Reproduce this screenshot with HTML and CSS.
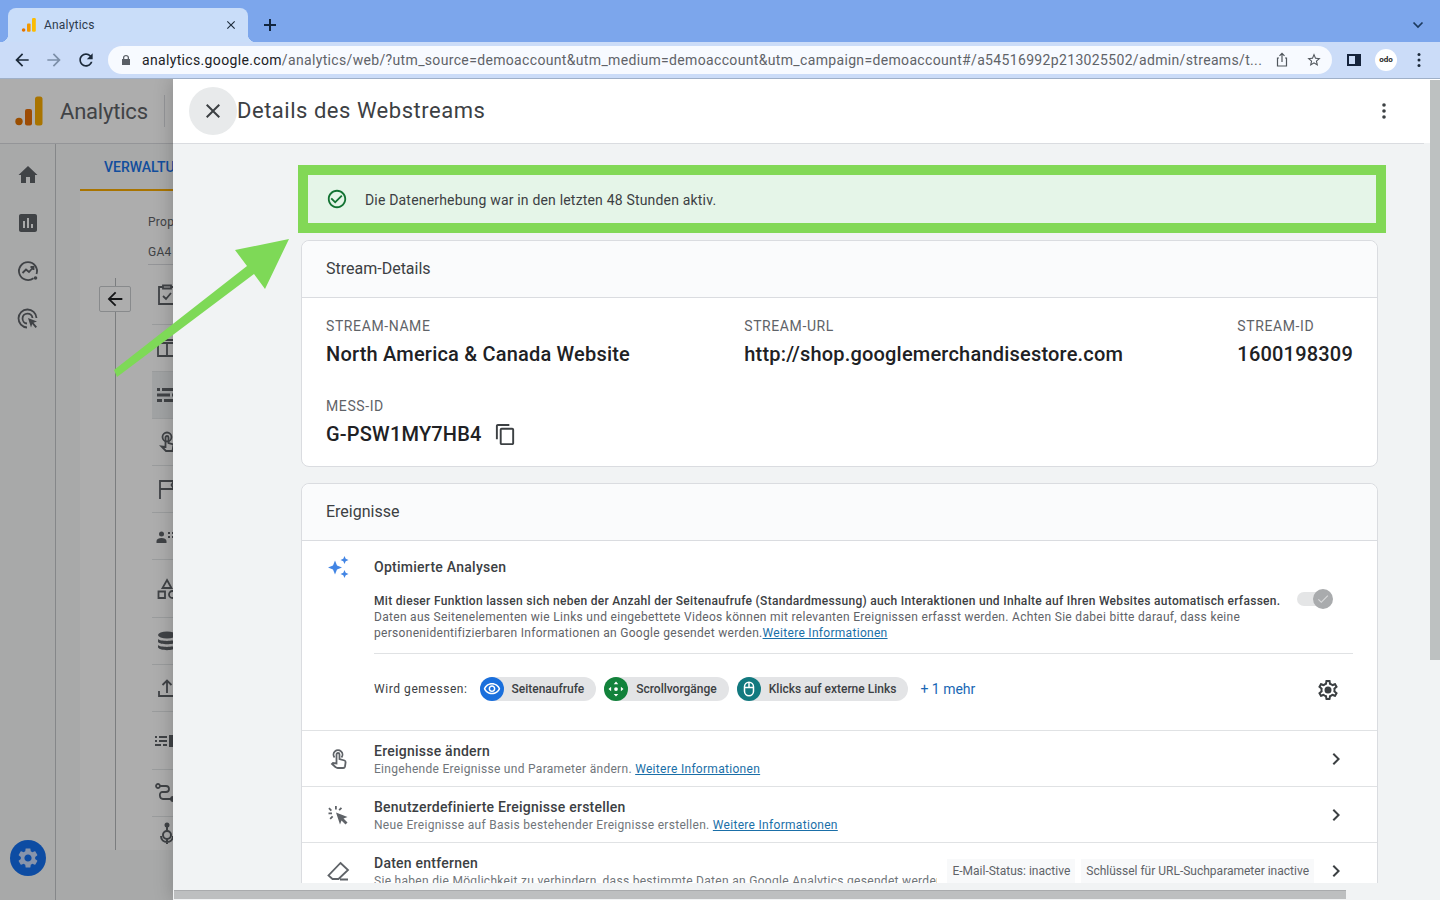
FILE: index.html
```html
<!DOCTYPE html>
<html lang="de">
<head>
    <meta charset="UTF-8">
    <title>Analytics</title>
    <link rel="stylesheet" href="styles.css">
</head>
<body>
    <div class="tabstrip">
        <div class="tab">
            <svg class="favicon" viewBox="0 0 16 16"><circle cx="2.6" cy="13" r="1.8" fill="#e37400"/><rect x="6" y="6.5" width="3.6" height="8.3" rx="1" fill="#f29900"/><rect x="11" y="1" width="3.8" height="13.8" rx="1.2" fill="#fbbc04"/></svg>
            <span class="tab-title">Analytics</span>
            <svg class="tab-close" viewBox="0 0 24 24"><path d="M19 6.41L17.59 5 12 10.59 6.41 5 5 6.41 10.59 12 5 17.59 6.41 19 12 13.41 17.59 19 19 17.59 13.41 12z"/></svg>
        </div>
        <svg class="new-tab" viewBox="0 0 14 14"><path d="M6 1h2v5h5v2H8v5H6V8H1V6h5z"/></svg>
        <svg class="tab-list" viewBox="0 0 12 12"><path d="M1.5 3.5L6 8l4.5-4.5" fill="none" stroke="#1c3a5e" stroke-width="1.7"/></svg>
    </div>

    <div class="toolbar">
        <svg class="nav-icon" viewBox="0 0 24 24"><path d="M20 11H7.83l5.59-5.59L12 4l-8 8 8 8 1.41-1.41L7.83 13H20v-2z"/></svg>
        <svg class="nav-icon muted" viewBox="0 0 24 24"><path d="M12 4l-1.41 1.41L16.17 11H4v2h12.17l-5.58 5.59L12 20l8-8z"/></svg>
        <svg class="nav-icon" viewBox="0 0 24 24"><path d="M17.65 6.35C16.2 4.9 14.21 4 12 4c-4.42 0-7.99 3.58-7.99 8s3.57 8 7.99 8c3.73 0 6.84-2.55 7.73-6h-2.08c-.82 2.33-3.04 4-5.65 4-3.31 0-6-2.69-6-6s2.69-6 6-6c1.66 0 3.14.69 4.22 1.78L13 11h7V4l-2.35 2.35z"/></svg>
        <div class="urlbar">
            <svg class="lock" viewBox="0 0 12 12"><path d="M3 5V3.6C3 1.9 4.3 1 6 1s3 .9 3 2.6V5h1v6H2V5zm1.3 0h3.4V3.6C7.7 2.6 7 2.2 6 2.2s-1.7.4-1.7 1.4z"/></svg>
            <span class="url"><b>analytics.google.com</b>/analytics/web/?utm_source=demoaccount&amp;utm_medium=demoaccount&amp;utm_campaign=demoaccount#/a54516992p213025502/admin/streams/t...</span>
            <svg class="url-action share" viewBox="0 0 16 16"><path d="M5 6H3.5v8h9V6H11M8 10V1.500M5.500 3.800L8 1.300l2.500 2.500" fill="none" stroke="#50565c" stroke-width="1.2"/></svg>
            <svg class="url-action" viewBox="0 0 24 24"><path d="M22 9.24l-7.19-.62L12 2 9.19 8.63 2 9.24l5.46 4.73L5.82 21 12 17.27 18.18 21l-1.630-7.03L22 9.24zM12 15.4l-3.76 2.27 1-4.28-3.32-2.88 4.38-.38L12 6.100l1.710 4.040 4.380.38-3.320 2.880 1 4.280L12 15.4z"/></svg>
        </div>
        <div class="side-panel"></div>
        <div class="avatar">odo</div>
        <svg class="chrome-menu" viewBox="0 0 4 16"><circle cx="2" cy="2.500" r="1.500"/><circle cx="2" cy="8" r="1.500"/><circle cx="2" cy="13.500" r="1.500"/></svg>
    </div>

    <div class="viewport">
        <div class="app">
            <header class="app-header">
                <svg class="logo" viewBox="0 0 28 30"><circle cx="4" cy="25.500" r="3.700" fill="#e37400"/><rect x="10" y="13" width="7" height="16.500" rx="2" fill="#e8710a"/><rect x="20" y="0.500" width="7.500" height="29" rx="2.500" fill="#f9ab00"/></svg>
                <span class="product">Analytics</span>
                <span class="header-divider"></span>
            </header>
            <div class="app-body">
                <nav class="rail">
                    <svg class="rail-icon" viewBox="0 0 24 24" fill="#5f6368"><path d="M10 20v-6h4v6h5v-8h2.500L12 3 2.500 12H5v8z"/></svg>
                    <svg class="rail-icon" viewBox="0 0 24 24" fill="#5f6368"><path d="M19 3H5c-1.100 0-2 .9-2 2v14c0 1.100.9 2 2 2h14c1.100 0 2-.9 2-2V5c0-1.100-.9-2-2-2zM9 17H7v-7h2v7zm4 0h-2V7h2v10zm4 0h-2v-4h2v4z"/></svg>
                    <svg class="rail-icon" viewBox="0 0 24 24" fill="none" stroke="#5f6368" stroke-width="1.800"><path d="M17.500 19.200A9 9 0 1 1 20.500 15"/><path d="M6.500 14l3.500-3.500 3 2.500 4.500-5M14.500 8h3v3"/><circle cx="19.500" cy="19" r="1.800" fill="#5f6368" stroke="none"/></svg>
                    <svg class="rail-icon" viewBox="0 0 24 24" fill="none" stroke="#5f6368" stroke-width="1.800"><path d="M11 20.500a9 9 0 1 1 9.500-9.500M11 16.500a5 5 0 1 1 5.500-5.500"/><path d="M12 11l9 3.500-3.500 1.200 3.500 4-1.500 1.300-3.300-4-1.200 3.500z" fill="#5f6368" stroke="none"/></svg>
                    <div class="fab">
                        <svg viewBox="0 0 24 24"><path d="M19.140 12.940c.04-.3.06-.61.06-.94 0-.32-.02-.64-.07-.94l2.030-1.580c.18-.14.23-.41.12-.61l-1.920-3.320c-.12-.22-.37-.29-.59-.22l-2.390.96c-.5-.38-1.030-.7-1.620-.94l-.36-2.540c-.04-.24-.24-.41-.48-.41h-3.840c-.24 0-.43.17-.47.41l-.36 2.540c-.59.24-1.130.57-1.620.94l-2.390-.96c-.22-.08-.47 0-.59.22L2.740 8.870c-.12.21-.08.47.12.61l2.030 1.580c-.05.3-.09.63-.09.94s.02.64.07.94l-2.030 1.580c-.18.14-.23.41-.12.61l1.920 3.320c.12.22.37.29.59.22l2.390-.96c.5.38 1.030.7 1.620.94l.36 2.540c.05.24.24.41.48.41h3.840c.24 0 .44-.17.47-.41l.36-2.540c.59-.24 1.130-.56 1.620-.94l2.390.96c.22.08.47 0 .59-.22l1.920-3.320c.12-.22.07-.47-.12-.61l-2.010-1.580zM12 15.600c-1.980 0-3.600-1.620-3.600-3.600s1.620-3.600 3.600-3.600 3.600 1.620 3.600 3.600-1.620 3.600-3.600 3.600z"/></svg>
                    </div>
                </nav>
                <main class="admin-main">
                    <div class="admin-tabs"><span class="admin-tab">VERWALTUNG</span></div>
                    <div class="admin-panel">
                        <div class="back-col">
                            <div class="back-line">
                                <div class="back-btn"><svg viewBox="0 0 24 24"><path d="M20 11H7.830l5.590-5.590L12 4l-8 8 8 8 1.410-1.410L7.830 13H20v-2z"/></svg></div>
                            </div>
                        </div>
                        <div class="prop-col">
                            <div class="prop-label">Property</div>
                            <div class="prop-name">GA4 - Google Merch Shop</div>
                            <div class="nav-row first"><svg viewBox="0 0 24 24" fill="none" stroke="#5f6368" stroke-width="1.800"><path d="M8 4H4v17h16V4h-4M8 2.500h8v3H8zM8 13l3 3 5-6"/></svg></div>
                            <div class="nav-row"><svg viewBox="0 0 24 24" fill="none" stroke="#5f6368" stroke-width="1.800"><path d="M3 7h18v13H3zM3 7l2-3h14l2 3M12 7v13"/></svg></div>
                            <div class="nav-row active"><svg viewBox="0 0 24 24" fill="#5f6368"><path d="M2 5h3v3H2zM7 5h15v3H7zM2 10.500h13v3H2zM17 10.500h5v3h-5zM2 16h5v3H2zM9 16h13v3H9z"/></svg></div>
                            <div class="nav-row"><svg viewBox="0 0 24 24" fill="none" stroke="#5f6368" stroke-width="1.800"><circle cx="12" cy="7" r="4.500"/><path d="M10.500 17V7.500a1.500 1.500 0 0 1 3 0V13l5 1.500-1 6.500H11l-4.500-4.500z"/></svg></div>
                            <div class="nav-row"><svg viewBox="0 0 24 24" fill="none" stroke="#5f6368" stroke-width="1.800"><path d="M5 22V4h14l-2.500 4 2.500 4H5"/></svg></div>
                            <div class="nav-row"><svg viewBox="0 0 24 24" fill="#5f6368"><circle cx="6.500" cy="10" r="2.500"/><path d="M1.500 19v-2c0-2 2.500-3 5-3s5 1 5 3v2zM13 8h2v2h-2zM17 8h5v2h-5zM13 12h2v2h-2zM17 12h5v2h-5z"/></svg></div>
                            <div class="nav-row tall"><svg viewBox="0 0 24 24" fill="none" stroke="#5f6368" stroke-width="1.800"><path d="M12 3l4.500 8h-9zM3.500 14.500h6.500v6.500H3.500z"/><circle cx="17.500" cy="17.500" r="3.500"/></svg></div>
                            <div class="nav-row"><svg viewBox="0 0 24 24" fill="#5f6368"><ellipse cx="12" cy="6" rx="9" ry="3.500"/><path d="M3 10c2 2.500 16 2.500 18 0v3c-2 3-16 3-18 0zM3 16c2 2.500 16 2.500 18 0v2.500c-2 3.500-16 3.500-18 0z"/></svg></div>
                            <div class="nav-row"><svg viewBox="0 0 24 24" fill="none" stroke="#5f6368" stroke-width="1.800"><path d="M4 15v5h16v-5M12 17V5M7.500 9L12 4.500 16.500 9"/></svg></div>
                            <div class="nav-row tall"><svg viewBox="0 0 24 24" fill="#5f6368"><path d="M0 7h2v2H0zM4 7h8v2H4zM0 11h2v2H0zM4 11h8v2H4zM0 15h6v2H0zM8 15h4v2H8zM14 6h10v12H14z"/></svg></div>
                            <div class="nav-row"><svg viewBox="0 0 24 24" fill="none" stroke="#5f6368" stroke-width="1.800"><circle cx="3" cy="5" r="2"/><path d="M5 5h6c4 0 4 6 0 6H7c-3 0-3 7 1 7h8"/><circle cx="18" cy="18" r="2" fill="#5f6368"/></svg></div>
                            <div class="nav-row last"><svg viewBox="0 0 24 24" fill="none" stroke="#5f6368" stroke-width="2"><circle cx="12" cy="3" r="2.500" fill="#5f6368" stroke="none"/><circle cx="12" cy="13" r="4"/><path d="M12 5v4M6 14c0 8 12 8 12 0M12 17v5"/></svg></div>
                        </div>
                    </div>
                </main>
            </div>
        </div>

        <div class="scrim"></div>

        <section class="drawer">
            <div class="drawer-main">
                <div class="drawer-header">
                    <div class="close-btn"><svg viewBox="0 0 24 24"><path d="M19 6.410L17.590 5 12 10.590 6.410 5 5 6.410 10.590 12 5 17.590 6.410 19 12 13.410 17.590 19 19 17.590 13.410 12z"/></svg></div>
                    <h1>Details des Webstreams</h1>
                    <svg class="drawer-more" viewBox="0 0 4 16"><circle cx="2" cy="2" r="1.800"/><circle cx="2" cy="8" r="1.800"/><circle cx="2" cy="14" r="1.800"/></svg>
                </div>
                <div class="drawer-body">
                    <div class="status-banner">
                        <svg viewBox="0 0 24 24"><path d="M16.590 7.580L10 14.170l-3.590-3.580L5 12l5 5 8-8zM12 2C6.480 2 2 6.480 2 12s4.480 10 10 10 10-4.480 10-10S17.520 2 12 2zm0 18c-4.420 0-8-3.580-8-8s3.580-8 8-8 8 3.580 8 8-3.580 8-8 8z"/></svg>
                        <span>Die Datenerhebung war in den letzten 48 Stunden aktiv.</span>
                    </div>

                    <div class="card details-card">
                        <div class="card-header">Stream-Details</div>
                        <div class="details-content">
                            <div class="details-row">
                                <div><div class="field-label">STREAM-NAME</div><div class="field-value">North America &amp; Canada Website</div></div>
                                <div><div class="field-label">STREAM-URL</div><div class="field-value">http://shop.googlemerchandisestore.com</div></div>
                                <div><div class="field-label">STREAM-ID</div><div class="field-value">1600198309</div></div>
                            </div>
                            <div class="field-label">MESS-ID</div>
                            <div class="field-value copy-value">G-PSW1MY7HB4
                                <svg viewBox="0 0 24 24"><path d="M16 1H4c-1.100 0-2 .9-2 2v14h2V3h12V1zm3 4H8c-1.100 0-2 .9-2 2v14c0 1.100.9 2 2 2h11c1.100 0 2-.9 2-2V7c0-1.100-.9-2-2-2zm0 16H8V7h11v14z"/></svg>
                            </div>
                        </div>
                    </div>

                    <div class="card events-card">
                        <div class="card-header">Ereignisse</div>
                        <div class="enhanced">
                            <svg class="sparkle" viewBox="0 0 24 24"><path d="M9 5.500l2 5 5 2-5 2-2 5-2-5-5-2 5-2zM18.500 1l1.200 2.800 2.800 1.200-2.800 1.200-1.200 2.800-1.200-2.800L14.500 5l2.800-1.200zM18.500 15l1.200 2.800 2.800 1.200-2.800 1.200-1.200 2.800-1.200-2.800-2.800-1.200 2.800-1.200z"/></svg>
                            <div class="enhanced-main">
                                <div class="enhanced-title">Optimierte Analysen</div>
                                <div class="enhanced-top">
                                    <p class="enhanced-desc"><strong>Mit dieser Funktion lassen sich neben der Anzahl der Seitenaufrufe (Standardmessung) auch Interaktionen und Inhalte auf Ihren Websites automatisch erfassen.</strong><br>Daten aus Seitenelementen wie Links und eingebettete Videos können mit relevanten Ereignissen erfasst werden. Achten Sie dabei bitte darauf, dass keine<br>personenidentifizierbaren Informationen an Google gesendet werden.<a href="#">Weitere Informationen</a></p>
                                    <div class="toggle"><span class="toggle-knob"><svg viewBox="0 0 24 24"><path d="M9 16.200L4.800 12l-1.400 1.400L9 19 21 7l-1.400-1.400z"/></svg></span></div>
                                </div>
                                <div class="measured">
                                    <span class="measured-label">Wird gemessen:</span>
                                    <span class="chip"><span class="chip-icon blue"><svg viewBox="0 0 24 24"><path d="M12 6c3.790 0 7.170 2.130 8.820 5.500C19.170 14.870 15.790 17 12 17s-7.170-2.130-8.820-5.500C4.830 8.130 8.210 6 12 6m0-2C7 4 2.730 7.110 1 11.500 2.730 15.890 7 19 12 19s9.270-3.110 11-7.500C21.270 7.110 17 4 12 4zm0 5c1.380 0 2.500 1.120 2.500 2.500S13.380 14 12 14s-2.500-1.120-2.500-2.500S10.620 9 12 9m0-2c-2.480 0-4.500 2.020-4.500 4.500S9.520 16 12 16s4.500-2.020 4.500-4.500S14.480 7 12 7z"/></svg></span>Seitenaufrufe</span>
                                    <span class="chip"><span class="chip-icon green"><svg viewBox="0 0 24 24"><circle cx="12" cy="12" r="2.500"/><path d="M12 2l3 3.500H9zM12 22l-3-3.500h6zM2 12l3.500-3v6zM22 12l-3.500 3V9z"/></svg></span>Scrollvorgänge</span>
                                    <span class="chip"><span class="chip-icon teal"><svg viewBox="0 0 24 24" stroke="#fff" stroke-width="2"><rect x="6" y="3" width="12" height="18" rx="6"/><path d="M12 3v7M6 10h12"/></svg></span>Klicks auf externe Links</span>
                                    <span class="more-link">+ 1 mehr</span>
                                    <svg class="settings" viewBox="0 0 24 24"><path d="M19.430 12.980c.04-.32.07-.64.07-.98 0-.34-.03-.66-.07-.98l2.110-1.650c.19-.15.24-.42.12-.64l-2-3.460c-.09-.16-.26-.25-.44-.25-.06 0-.12.01-.17.03l-2.490 1c-.52-.4-1.080-.73-1.690-.98l-.38-2.650C14.460 2.180 14.250 2 14 2h-4c-.25 0-.46.18-.49.42l-.38 2.650c-.61.25-1.170.59-1.690.98l-2.490-1c-.06-.02-.12-.03-.18-.03-.17 0-.34.09-.43.25l-2 3.460c-.13.22-.07.49.12.64l2.110 1.650c-.04.32-.07.65-.07.98 0 .33.03.66.07.98l-2.110 1.650c-.19.15-.24.42-.12.64l2 3.460c.09.16.26.25.44.25.06 0 .12-.01.17-.03l2.490-1c.52.4 1.080.73 1.690.98l.38 2.650c.03.24.24.42.49.42h4c.25 0 .46-.18.49-.42l.38-2.650c.61-.25 1.170-.59 1.690-.98l2.490 1c.06.02.12.03.18.03.17 0 .34-.09.43-.25l2-3.460c.12-.22.07-.49-.12-.64l-2.110-1.650zm-1.980-1.710c.04.31.05.52.05.73 0 .21-.02.43-.05.73l-.14 1.130.89.7 1.080.84-.7 1.210-1.270-.51-1.040-.42-.9.68c-.43.32-.84.56-1.250.73l-1.060.43-.16 1.130-.2 1.350h-1.400l-.19-1.350-.16-1.130-1.060-.43c-.43-.18-.83-.41-1.230-.71l-.91-.7-1.060.43-1.270.51-.7-1.210 1.080-.84.89-.7-.14-1.130c-.03-.31-.05-.54-.05-.74s.02-.43.05-.73l.14-1.130-.89-.7-1.080-.84.7-1.210 1.270.51 1.040.42.9-.68c.43-.32.84-.56 1.250-.73l1.060-.43.16-1.130.2-1.350h1.390l.19 1.350.16 1.130 1.060.43c.43.18.83.41 1.230.71l.91.7 1.060-.43 1.270-.51.7 1.210-1.070.85-.89.7.14 1.130zM12 8.500a3.500 3.500 0 1 0 0 7 3.500 3.500 0 0 0 0-7z"/></svg>
                                </div>
                            </div>
                        </div>

                        <div class="event-row">
                            <svg class="row-icon" viewBox="0 0 24 24" fill="none" stroke="#5f6368" stroke-width="1.800"><path d="M8.500 10.500a4.500 4.500 0 1 1 7 0"/><path d="M10.500 16.500V7.500a1.500 1.500 0 0 1 3 0V12l5 1.500c1 .4 1.200 1 1.100 2l-.6 4c-.2 1-.8 1.500-1.800 1.500h-5.500c-1 0-1.500-.3-2-.8l-3.700-3.200 1-1z"/></svg>
                            <div class="row-text"><div class="row-title">Ereignisse ändern</div><div class="row-sub">Eingehende Ereignisse und Parameter ändern. <a href="#">Weitere Informationen</a></div></div>
                            <svg class="chevron" viewBox="0 0 24 24"><path d="M10 6L8.590 7.410 13.170 12l-4.580 4.590L10 18l6-6z"/></svg>
                        </div>
                        <div class="event-row">
                            <svg class="row-icon" viewBox="0 0 24 24" fill="#5f6368"><path d="M10 9.500l11.500 4.500-4 1.500 4 4-2 2-4-4-1.500 4zM9 3h1.800v3.500H9zM2.500 9.500H6v1.800H2.500zM14.800 4.200l1.300 1.300-2.300 2.300-1.300-1.300zM3.600 4.500L6 6.900 4.700 8.200 2.300 5.800zM6 12.800l1.300 1.300-2.500 2.400-1.300-1.300z"/></svg>
                            <div class="row-text"><div class="row-title">Benutzerdefinierte Ereignisse erstellen</div><div class="row-sub">Neue Ereignisse auf Basis bestehender Ereignisse erstellen. <a href="#">Weitere Informationen</a></div></div>
                            <svg class="chevron" viewBox="0 0 24 24"><path d="M10 6L8.590 7.410 13.170 12l-4.580 4.590L10 18l6-6z"/></svg>
                        </div>
                        <div class="event-row">
                            <svg class="row-icon" viewBox="0 0 24 24" fill="none" stroke="#5f6368" stroke-width="1.800"><path d="M14.500 4L22 11 12.500 20H6.500L2.500 16.500zM14 20.500h8"/></svg>
                            <div class="row-text"><div class="row-title">Daten entfernen</div><div class="row-sub">Sie haben die Möglichkeit zu verhindern, dass bestimmte Daten an Google Analytics gesendet werden.</div></div>
                            <span class="row-tag">E-Mail-Status: inactive</span>
                            <span class="row-tag">Schlüssel für URL-Suchparameter inactive</span>
                            <svg class="chevron" viewBox="0 0 24 24"><path d="M10 6L8.590 7.410 13.170 12l-4.580 4.590L10 18l6-6z"/></svg>
                        </div>
                    </div>
                </div>
                <div class="hscroll"><div class="hscroll-thumb"></div></div>
            </div>
            <div class="vscroll"><div class="vscroll-thumb"></div></div>
        </section>
    </div>

    <!-- green annotation arrow drawn on top of the screenshot -->
    <svg class="annotation" viewBox="0 0 1440 900"><polygon points="114,370 247,266 235,250 289,239 265,289 254,274 117,377" fill="#7ed957"/></svg>
</body>
</html>
```

FILE: styles.css
```css
* {
    box-sizing: border-box;
    margin: 0;
    padding: 0;
}

body {
    height: 900px;
    overflow: hidden;
    font-family: Roboto, "Liberation Sans", sans-serif;
    color: #202124;
    background: #fff;
}

svg {
    display: block;
    flex: none;
}

a {
    color: #1a6fa8;
}

/* browser chrome */
.tabstrip {
    display: flex;
    align-items: flex-end;
    height: 42px;
    padding-left: 8px;
    background: #7ca6ec;
}

.tab {
    position: relative;
    display: flex;
    align-items: center;
    width: 240px;
    height: 34px;
    padding: 0 10px 0 13px;
    background: #c9ddf9;
    border-radius: 8px 8px 0 0;
}

.tab::before,
.tab::after {
    content: "";
    position: absolute;
    bottom: 0;
    width: 8px;
    height: 8px;
}

.tab::before {
    left: -8px;
    background: radial-gradient(circle at 0 0, transparent 8px, #c9ddf9 8.5px);
}

.tab::after {
    right: -8px;
    background: radial-gradient(circle at 100% 0, transparent 8px, #c9ddf9 8.5px);
}

.favicon {
    width: 16px;
    height: 16px;
}

.tab-title {
    flex: 1;
    margin-left: 7px;
    font-size: 12px;
    letter-spacing: 0.2px;
    color: #2c3a4d;
}

.tab-close {
    width: 14px;
    height: 14px;
    fill: #1f2d3d;
}

.new-tab {
    width: 14px;
    height: 14px;
    margin: 0 0 10px 15px;
    fill: #12263f;
}

.tab-list {
    width: 12px;
    height: 12px;
    margin: 0 16px 11px auto;
}

.toolbar {
    display: flex;
    align-items: center;
    height: 37px;
    padding-left: 12px;
    background: #cbdcf8;
    border-bottom: 1px solid #9fb0c8;
}

.nav-icon {
    width: 20px;
    height: 20px;
    margin-right: 12px;
    fill: #1c2a3a;
}

.nav-icon.muted {
    fill: #7c8fa8;
}

.urlbar {
    display: flex;
    align-items: center;
    width: 1224px;
    height: 28px;
    padding: 0 10px 0 12px;
    background: #f7faff;
    border-radius: 14px;
}

.lock {
    width: 12px;
    height: 12px;
    fill: #5a5f66;
}

.url {
    flex: 1;
    min-width: 0;
    margin: 0 4px 0 10px;
    white-space: nowrap;
    font-size: 14px;
    letter-spacing: 0.34px;
    color: #5f6368;
}

.url b {
    font-weight: 400;
    color: #202124;
}

.url-action {
    width: 16px;
    height: 16px;
    margin-left: 16px;
    fill: #50565c;
}

.url-action.share {
    margin-left: 0;
}

.side-panel {
    width: 14px;
    height: 12px;
    margin-left: 15px;
    border: 2px solid #15233b;
    border-right-width: 6px;
    background: #cbdcf8;
}

.avatar {
    width: 22px;
    height: 22px;
    margin-left: 14px;
    border-radius: 50%;
    background: #fff;
    font-size: 8px;
    font-weight: 700;
    line-height: 22px;
    text-align: center;
    color: #222;
}

.chrome-menu {
    width: 4px;
    height: 16px;
    margin-left: 20px;
    fill: #1c2a3a;
}

/* page behind the drawer */
.viewport {
    position: relative;
    height: 821px;
    overflow: hidden;
}

.app {
    display: flex;
    flex-direction: column;
    height: 100%;
    background: #f8f9fa;
}

.app-header {
    display: flex;
    align-items: center;
    flex: none;
    height: 65px;
    padding-left: 15px;
    background: #fff;
    border-bottom: 1px solid #dadce0;
}

.logo {
    width: 28px;
    height: 30px;
}

.product {
    margin-left: 17px;
    font-size: 22px;
    letter-spacing: -0.2px;
    color: #5f6368;
}

.header-divider {
    width: 1px;
    height: 32px;
    margin-left: 16px;
    background: #dadce0;
}

.app-body {
    display: flex;
    flex: 1;
    min-height: 0;
}

.rail {
    display: flex;
    flex-direction: column;
    align-items: center;
    gap: 24px;
    flex: none;
    width: 56px;
    padding: 19px 0 24px;
    border-right: 1px solid #c4c7ca;
}

.rail-icon {
    width: 24px;
    height: 24px;
}

.fab {
    display: flex;
    align-items: center;
    justify-content: center;
    width: 36px;
    height: 36px;
    margin-top: auto;
    border-radius: 50%;
    background: #1470f0;
}

.fab svg {
    width: 24px;
    height: 24px;
    fill: #c7dafc;
}

.admin-main {
    display: flex;
    flex-direction: column;
    flex: 1;
    padding: 0 0 50px 24px;
}

.admin-tabs {
    flex: none;
    height: 47px;
    border-bottom: 2px solid #f9ab00;
}

.admin-tab {
    display: block;
    padding: 15px 0 0 24px;
    font-size: 14px;
    font-weight: 500;
    color: #1a73e8;
}

.admin-panel {
    display: flex;
    flex: 1;
    min-height: 0;
    background: #fff;
}

.back-col {
    flex: none;
    display: flex;
    width: 68px;
    padding: 87px 0 0 35px;
}

.back-line {
    height: 100%;
    border-left: 1px solid #b5b8bb;
}

.back-btn {
    display: flex;
    align-items: center;
    justify-content: center;
    width: 32px;
    height: 26px;
    margin: 8px 0 0 -17px;
    background: #fff;
    border: 1px solid #c9cccf;
    border-radius: 2px;
}

.back-btn svg {
    width: 22px;
    height: 22px;
    fill: #202124;
}

.prop-col {
    flex: 1;
    padding-top: 23px;
}

.prop-label,
.prop-name {
    height: 16px;
    font-size: 12px;
    line-height: 16px;
    letter-spacing: 0.3px;
    white-space: nowrap;
    color: #5f6368;
}

.prop-name {
    height: 21px;
    margin-top: 14px;
    border-bottom: 1px solid #dadce0;
}

.nav-row {
    display: flex;
    align-items: center;
    height: 47px;
    margin-left: 4px;
    padding-left: 3px;
    border-bottom: 1px solid #e4e6e8;
}

.nav-row svg {
    width: 24px;
    height: 24px;
}

.nav-row.first {
    height: 60px;
}

.nav-row.tall {
    height: 58px;
}

.nav-row.active {
    background: #eef0f2;
}

.nav-row.last {
    height: 34px;
    border-bottom: none;
}

.scrim {
    position: absolute;
    inset: 0;
    background: rgba(0, 0, 0, 0.32);
}

/* details drawer */
.drawer {
    position: absolute;
    top: 0;
    right: 0;
    bottom: 0;
    left: 173px;
    display: flex;
    background: #f1f3f4;
    box-shadow: 0 0 18px rgba(0, 0, 0, 0.22);
}

.drawer-main {
    display: flex;
    flex-direction: column;
    flex: 1;
    min-width: 0;
}

.drawer-header {
    display: flex;
    align-items: center;
    flex: none;
    height: 65px;
    padding: 0 38px 1px 16px;
    background: #fff;
    border-bottom: 1px solid #dadce0;
}

.close-btn {
    display: flex;
    align-items: center;
    justify-content: center;
    flex: none;
    width: 48px;
    height: 48px;
    border-radius: 50%;
    background: #e8eaeb;
}

.close-btn svg {
    width: 24px;
    height: 24px;
    fill: #3c4043;
}

.drawer-header h1 {
    flex: 1;
    font-size: 22px;
    font-weight: 400;
    letter-spacing: 0.52px;
    color: #3c4043;
}

.drawer-more {
    width: 4px;
    height: 16px;
    fill: #3c4043;
}

.drawer-body {
    flex: 1;
    min-height: 0;
    overflow: hidden;
    padding: 21px 46px 0 128px;
}

.status-banner {
    display: flex;
    align-items: center;
    height: 68px;
    margin: 0 -8px 7px -3px;
    padding-left: 18px;
    background: #e5f5e8;
    border: 10px solid #82d856;
    font-size: 14px;
    letter-spacing: 0.18px;
    color: #3c4043;
}

.status-banner svg {
    width: 22px;
    height: 22px;
    margin-right: 17px;
    fill: #137333;
}

.status-banner span {
    margin-top: 2px;
}

.card {
    background: #fff;
    border: 1px solid #dadce0;
    border-radius: 8px;
}

.details-card {
    height: 227px;
    margin-bottom: 16px;
}

.card-header {
    height: 57px;
    padding-left: 24px;
    background: #fafbfc;
    border-bottom: 1px solid #dadce0;
    border-radius: 8px 8px 0 0;
    font-size: 16px;
    line-height: 56px;
    color: #3c4043;
}

.details-content {
    padding: 18px 24px 0;
}

.details-row {
    display: flex;
    justify-content: space-between;
    margin-bottom: 28px;
}

.field-label {
    font-size: 14px;
    line-height: 20px;
    letter-spacing: 0.6px;
    color: #5f6368;
}

.field-value {
    margin-top: 4px;
    font-size: 20px;
    font-weight: 500;
    line-height: 28px;
    letter-spacing: 0.2px;
    color: #202124;
}

.copy-value {
    display: flex;
    align-items: center;
    gap: 12px;
}

.copy-value svg {
    width: 23px;
    height: 23px;
    fill: #3c4043;
}

.enhanced {
    display: flex;
    height: 189px;
    padding: 14px 24px 0;
}

.sparkle {
    width: 24px;
    height: 24px;
    margin-right: 24px;
    fill: #4285e4;
}

.enhanced-main {
    flex: 1;
    min-width: 0;
}

.enhanced-title {
    font-size: 14px;
    font-weight: 500;
    line-height: 24px;
    letter-spacing: 0.26px;
    color: #3c4043;
}

.enhanced-top {
    display: flex;
    justify-content: space-between;
    height: 61px;
    margin-top: 14px;
    border-bottom: 1px solid #e0e2e4;
}

.enhanced-desc {
    font-size: 12px;
    line-height: 16px;
    letter-spacing: 0.3px;
    white-space: nowrap;
    color: #5f6368;
}

.enhanced-desc strong {
    font-weight: 500;
    color: #3c4043;
}

.toggle {
    position: relative;
    flex: none;
    width: 34px;
    height: 14px;
    margin: -1px 22px 0 0;
    border-radius: 7px;
    background: #e4e5e6;
}

.toggle-knob {
    position: absolute;
    top: -3px;
    right: -2px;
    display: flex;
    align-items: center;
    justify-content: center;
    width: 20px;
    height: 20px;
    border-radius: 50%;
    background: #a9abad;
}

.toggle-knob svg {
    width: 14px;
    height: 14px;
    fill: #d8d9da;
}

.measured {
    display: flex;
    align-items: center;
    height: 70px;
}

.measured-label {
    margin-right: 12px;
    font-size: 12px;
    letter-spacing: 0.57px;
    color: #3c4043;
}

.chip {
    display: flex;
    align-items: center;
    height: 24px;
    margin-right: 8px;
    padding-right: 12px;
    border-radius: 12px;
    background: #e3e4e6;
    font-size: 12px;
    font-weight: 500;
    color: #3c4043;
}

.chip-icon {
    display: flex;
    align-items: center;
    justify-content: center;
    width: 24px;
    height: 24px;
    margin-right: 8px;
    border-radius: 50%;
}

.chip-icon svg {
    width: 18px;
    height: 18px;
    fill: #fff;
}

.chip-icon.blue {
    background: #1a6fdc;
}

.chip-icon.green {
    background: #12823b;
}

.chip-icon.teal {
    background: #12797f;
}

.chip-icon.teal svg {
    fill: none;
}

.more-link {
    margin-left: 4px;
    font-size: 14px;
    color: #1967b4;
}

.settings {
    width: 24px;
    height: 24px;
    margin: 1px 13px 0 auto;
    fill: #3c4043;
}

.event-row {
    display: flex;
    align-items: flex-start;
    height: 56px;
    padding: 11px 29px 0 24px;
    border-top: 1px solid #e0e2e4;
}

.row-icon {
    width: 24px;
    height: 24px;
    margin: 5px 24px 0 0;
}

.row-text {
    flex: 1;
    min-width: 0;
    margin-right: 10px;
    overflow: hidden;
    white-space: nowrap;
}

.row-title {
    font-size: 14px;
    font-weight: 500;
    line-height: 18px;
    letter-spacing: 0.24px;
    color: #3c4043;
}

.row-sub {
    margin-top: 1px;
    font-size: 12px;
    line-height: 16px;
    letter-spacing: 0.3px;
    color: #70757a;
}

.row-tag {
    flex: none;
    height: 24px;
    margin: 5px 6px 0 0;
    padding: 0 5px;
    background: #f8f9fa;
    font-size: 12px;
    line-height: 24px;
    color: #5f6368;
}

.row-tag:last-of-type {
    margin-right: 10px;
}

.chevron {
    width: 24px;
    height: 24px;
    margin-top: 5px;
    fill: #3c4043;
}

.hscroll {
    flex: none;
    height: 17px;
    padding: 7px 0 0 1px;
}

.hscroll-thumb {
    width: 1172px;
    height: 9px;
    background: #bdbfc0;
    border-top: 1px solid #a9abad;
}

.vscroll {
    flex: none;
    width: 16px;
    padding: 1px 0 0 6px;
    background: linear-gradient(#fff 64px, #f1f3f4 64px);
}

.vscroll-thumb {
    width: 10px;
    height: 580px;
    background: #bdc1c1;
}

.annotation {
    position: absolute;
    top: 0;
    left: 0;
    width: 1440px;
    height: 900px;
    pointer-events: none;
}
```
